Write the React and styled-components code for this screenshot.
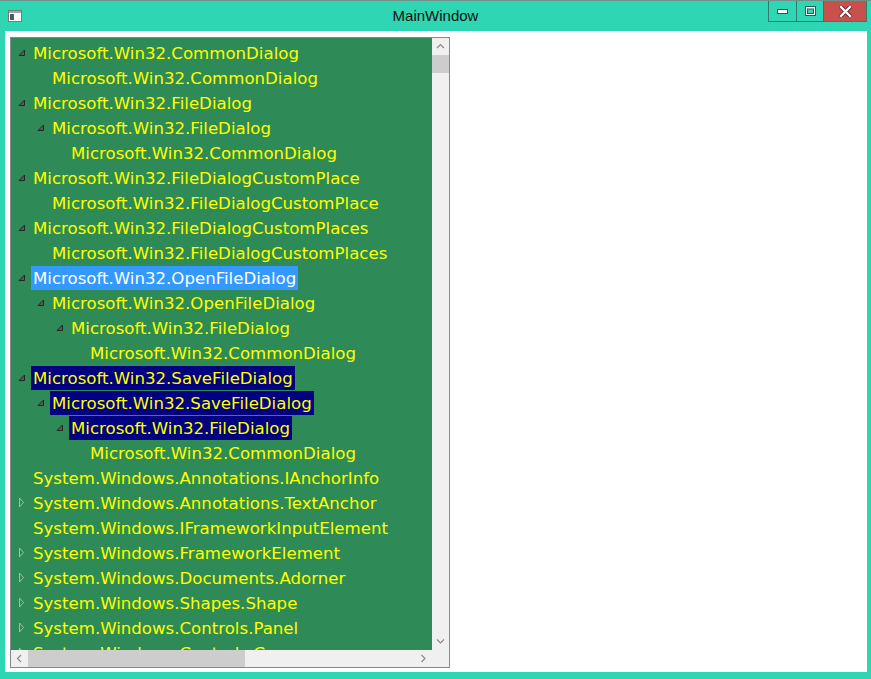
import React from "react";
import styled, { createGlobalStyle } from "styled-components";

const Global = createGlobalStyle`
  html, body { margin: 0; padding: 0; overflow: hidden; background: #2fd6b4; }
  * { box-sizing: border-box; }
`;

const Window = styled.div`
  width: 871px;
  height: 679px;
  background: #2fd6b4;
  border-top: 1px solid #6f8f88;
  display: flex;
  flex-direction: column;
`;

const TitleBar = styled.div`
  height: 30px;
  flex: none;
  display: grid;
  grid-template-columns: 1fr auto 1fr;
  align-items: start;
`;

const AppIcon = styled.div`
  padding: 9px 0 0 8px;
  display: flex;
`;

const Title = styled.div`
  font-family: "Segoe UI", "Liberation Sans", Arial, sans-serif;
  font-size: 15px;
  line-height: 20px;
  padding-top: 5px;
  color: #111;
`;

const Controls = styled.div`
  justify-self: end;
  display: flex;
  margin-right: 4px;
  border: 1px solid #2f7d6e;
  border-top: none;
  height: 21px;
`;

const CtrlButton = styled.div`
  width: ${(p) => p.$w}px;
  height: 20px;
  display: flex;
  align-items: center;
  justify-content: center;
  background: ${(p) => (p.$close ? "#c9504c" : "transparent")};
  border-left: ${(p) => (p.$first ? "none" : "1px solid #2f7d6e")};
`;

const Client = styled.div`
  flex: 1;
  margin: 0 4px 7px 5px;
  background: #ffffff;
  padding: 6px 0 0 5px;
`;

const TreeBox = styled.div`
  width: 440px;
  height: 631px;
  border: 1px solid #828790;
  display: grid;
  grid-template-columns: 1fr 17px;
  grid-template-rows: 1fr 17px;
  background: #f0f0f0;
`;

const TreeArea = styled.div`
  background: #2e8b57;
  overflow: hidden;
  padding-top: 3px;
`;

const Row = styled.div`
  height: 25px;
  display: flex;
  align-items: flex-start;
  padding-left: ${(p) => 1 + p.$level * 19}px;
  white-space: nowrap;
`;

const Toggle = styled.div`
  width: 19px;
  height: 24px;
  flex: none;
  display: flex;
  align-items: center;
  justify-content: center;
  padding-bottom: 1px;
`;

const Header = styled.div`
  height: 24px;
  padding: 2px 2px 0;
  font-family: "Comic Sans MS", "DejaVu Sans", sans-serif;
  font-size: 16.6px;
  line-height: 22px;
  color: ${(p) => (p.$sel === "blue" ? "#ffffff" : "#ffff00")};
  background: ${(p) =>
    p.$sel === "blue" ? "#3399ff" : p.$sel === "navy" ? "#000080" : "transparent"};
`;

const VScroll = styled.div`
  background: #f0f0f0;
  display: flex;
  flex-direction: column;
`;

const HScroll = styled.div`
  background: #f0f0f0;
  display: flex;
`;

const Arrow = styled.div`
  width: 17px;
  height: 17px;
  flex: none;
  display: flex;
  align-items: center;
  justify-content: center;
`;

const VThumb = styled.div`
  width: 17px;
  height: 18px;
  background: #cdcdcd;
  flex: none;
`;

const HThumb = styled.div`
  height: 17px;
  width: 217px;
  background: #cdcdcd;
  flex: none;
`;

const Fill = styled.div`
  flex: 1;
`;

const Corner = styled.div`
  background: #f0f0f0;
`;

const items = [
  [0, "e", "Microsoft.Win32.CommonDialog"],
  [1, "", "Microsoft.Win32.CommonDialog"],
  [0, "e", "Microsoft.Win32.FileDialog"],
  [1, "e", "Microsoft.Win32.FileDialog"],
  [2, "", "Microsoft.Win32.CommonDialog"],
  [0, "e", "Microsoft.Win32.FileDialogCustomPlace"],
  [1, "", "Microsoft.Win32.FileDialogCustomPlace"],
  [0, "e", "Microsoft.Win32.FileDialogCustomPlaces"],
  [1, "", "Microsoft.Win32.FileDialogCustomPlaces"],
  [0, "e", "Microsoft.Win32.OpenFileDialog", "blue"],
  [1, "e", "Microsoft.Win32.OpenFileDialog"],
  [2, "e", "Microsoft.Win32.FileDialog"],
  [3, "", "Microsoft.Win32.CommonDialog"],
  [0, "e", "Microsoft.Win32.SaveFileDialog", "navy"],
  [1, "e", "Microsoft.Win32.SaveFileDialog", "navy"],
  [2, "e", "Microsoft.Win32.FileDialog", "navy"],
  [3, "", "Microsoft.Win32.CommonDialog"],
  [0, "", "System.Windows.Annotations.IAnchorInfo"],
  [0, "c", "System.Windows.Annotations.TextAnchor"],
  [0, "", "System.Windows.IFrameworkInputElement"],
  [0, "c", "System.Windows.FrameworkElement"],
  [0, "c", "System.Windows.Documents.Adorner"],
  [0, "c", "System.Windows.Shapes.Shape"],
  [0, "c", "System.Windows.Controls.Panel"],
  [0, "c", "System.Windows.Controls.Canvas"],
];

function Glyph({ kind }) {
  if (kind === "e") {
    return (
      <svg width="8" height="8" viewBox="0 0 8 8">
        <path d="M6.5,1 L6.5,6.5 L1,6.5 Z" fill="#595959" stroke="#262626" strokeWidth="1" />
      </svg>
    );
  }
  if (kind === "c") {
    return (
      <svg width="7" height="11" viewBox="0 0 7 11">
        <path d="M1.5,1 L5.5,5.5 L1.5,10 Z" fill="none" stroke="#a7b8ae" strokeWidth="1" />
      </svg>
    );
  }
  return null;
}

function Chevron({ dir }) {
  const d = {
    up: "M1,5 L4.5,1.5 L8,5",
    down: "M1,1.5 L4.5,5 L8,1.5",
    left: "M5,1 L1.5,4.5 L5,8",
    right: "M1.5,1 L5,4.5 L1.5,8",
  }[dir];
  const vertical = dir === "up" || dir === "down";
  return (
    <svg width={vertical ? 9 : 7} height={vertical ? 7 : 9} viewBox={vertical ? "0 0 9 7" : "0 0 7 9"}>
      <path d={d} fill="none" stroke="#8a8a8a" strokeWidth="1.2" />
    </svg>
  );
}

export default function App() {
  return (
    <>
      <Global />
      <Window>
        <TitleBar>
          <AppIcon>
            <svg width="14" height="12" viewBox="0 0 14 12">
              <rect x="0.5" y="0.5" width="13" height="11" fill="#ffffff" stroke="#7a7a7a" />
              <rect x="1" y="1" width="12" height="2" fill="#9aa8b4" />
              <rect x="2" y="4" width="4" height="6" fill="#505a66" />
            </svg>
          </AppIcon>
          <Title>MainWindow</Title>
          <Controls>
            <CtrlButton $w={27} $first>
              <svg width="11" height="6" viewBox="0 0 11 6">
                <rect x="0.5" y="1.5" width="10" height="4" fill="#ffffff" stroke="#2a5a50" />
              </svg>
            </CtrlButton>
            <CtrlButton $w={27}>
              <svg width="11" height="10" viewBox="0 0 11 10">
                <rect x="0.5" y="0.5" width="10" height="9" fill="#ffffff" stroke="#2a5a50" />
                <rect x="2.5" y="3" width="6" height="4.5" fill="#2fd6b4" stroke="#2a5a50" />
              </svg>
            </CtrlButton>
            <CtrlButton $w={43} $close>
              <svg width="13" height="11" viewBox="0 0 13 11">
                <path d="M2,1 L11,10 M11,1 L2,10" stroke="#5a1f1f" strokeWidth="4" strokeLinecap="square" />
                <path d="M2,1 L11,10 M11,1 L2,10" stroke="#ffffff" strokeWidth="2.4" strokeLinecap="square" />
              </svg>
            </CtrlButton>
          </Controls>
        </TitleBar>
        <Client>
          <TreeBox>
            <TreeArea>
              {items.map(([level, kind, text, sel], i) => (
                <Row key={i} $level={level}>
                  <Toggle>
                    <Glyph kind={kind} />
                  </Toggle>
                  <Header $sel={sel}>{text}</Header>
                </Row>
              ))}
            </TreeArea>
            <VScroll>
              <Arrow>
                <Chevron dir="up" />
              </Arrow>
              <VThumb />
              <Fill />
              <Arrow>
                <Chevron dir="down" />
              </Arrow>
            </VScroll>
            <HScroll>
              <Arrow>
                <Chevron dir="left" />
              </Arrow>
              <HThumb />
              <Fill />
              <Arrow>
                <Chevron dir="right" />
              </Arrow>
            </HScroll>
            <Corner />
          </TreeBox>
        </Client>
      </Window>
    </>
  );
}
